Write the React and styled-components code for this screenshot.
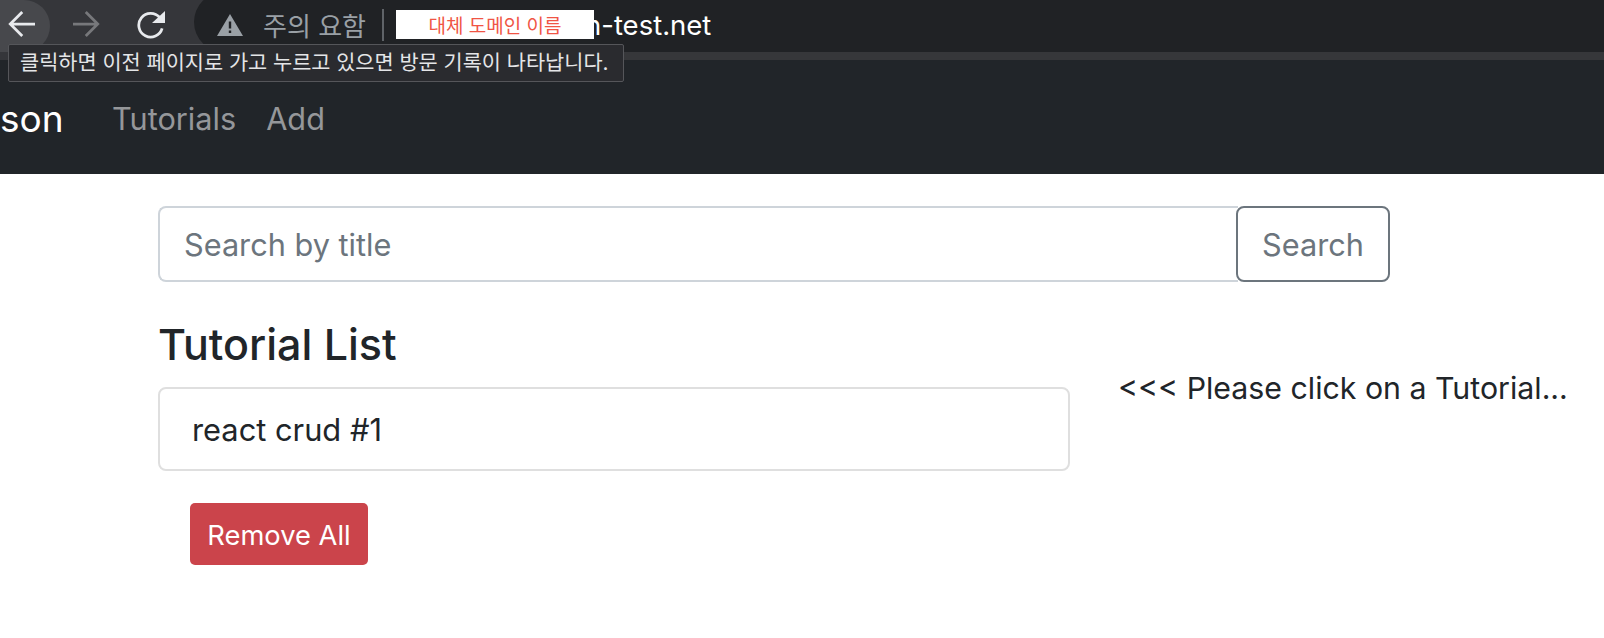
import styled, { createGlobalStyle } from "styled-components";

const GlobalStyle = createGlobalStyle`
    html, body {
        margin: 0;
        padding: 0;
        background: #fff;
        font-family: Inter, "Noto Sans CJK KR", sans-serif;
        color: #212529;
    }
    * {
        box-sizing: border-box;
    }
`

const Page = styled.div`
    position: relative;
    width: 1604px;
    height: 638px;
    overflow: hidden;
`

const BrowserBar = styled.div`
    display: flex;
    align-items: flex-start;
    height: 60px;
    background: linear-gradient(#202225 0, #202225 52px, #36373a 52px, #36373a 60px);
`

const NavButtons = styled.div`
    display: flex;
    align-items: flex-start;
    flex: none;
    width: 224px;
    height: 60px;
    margin-right: -30px;
    background: #35363a;
`

const NavButton = styled.div`
    display: flex;
    align-items: center;
    justify-content: center;
    flex: none;
    width: ${(p) => p.$w}px;
    height: 52px;
    padding-right: ${(p) => (p.$hover ? 6 : 0)}px;
    border-radius: 0 26px 26px 0;
    background: ${(p) => (p.$hover ? "#47484c" : "transparent")};
    svg {
        margin-top: -4px;
    }
`

const AddressBar = styled.div`
    position: relative;
    display: flex;
    align-items: center;
    flex: 1;
    height: 60px;
    margin-top: -8px;
    padding: 5px 0 0 23px;
    border-radius: 30px 0 0 30px;
    background: #202225;
`

const Warning = styled.span`
    margin-left: 20px;
    color: #9aa0a6;
    font-size: 26px;
`

const Divider = styled.span`
    width: 2px;
    height: 32px;
    margin: 0 12px 0 16px;
    background: #5f6368;
`

const DomainMask = styled.span`
    position: relative;
    z-index: 1;
    display: flex;
    align-items: center;
    justify-content: center;
    width: 198px;
    height: 29px;
    background: #fff;
    color: #f05545;
    font-size: 19px;
`

const Domain = styled.span`
    margin-left: -9px;
    color: #fff;
    font-size: 27.5px;
`

const Tooltip = styled.div`
    position: absolute;
    top: 44px;
    left: 8px;
    width: 616px;
    height: 38px;
    padding-left: 11px;
    line-height: 36px;
    background: #2a2b2f;
    border: 1px solid #55565a;
    border-radius: 2px;
    color: #e4e5e7;
    font-size: 20.8px;
    white-space: nowrap;
`

const NavBar = styled.nav`
    display: flex;
    align-items: center;
    height: 114px;
    padding-top: 2px;
    background: #212529;
`

const Brand = styled.span`
    width: 112px;
    color: #fff;
    font-size: 37px;
`

const NavLink = styled.span`
    margin-right: 30px;
    color: #95979a;
    font-size: 30.7px;
`

const Content = styled.main`
    padding: 32px 0 0 158px;
`

const SearchRow = styled.div`
    display: flex;
    width: 1232px;
    height: 76px;
`

const SearchInput = styled.div`
    flex: 1;
    padding-left: 24px;
    line-height: 74px;
    border: 2px solid #ced4da;
    border-right: 0;
    border-radius: 8px 0 0 8px;
    color: #6c757d;
    font-size: 30.7px;
`

const SearchButton = styled.div`
    width: 154px;
    margin-left: -2px;
    line-height: 74px;
    text-align: center;
    border: 2px solid #6c757d;
    border-radius: 8px;
    color: #6c757d;
    font-size: 30.7px;
`

const Columns = styled.div`
    display: flex;
    margin-top: 34px;
`

const ListColumn = styled.section`
    width: 912px;
`

const Heading = styled.h4`
    margin: 0;
    height: 71px;
    font-size: 43px;
    font-weight: 550;
    line-height: 56px;
`

const ListItem = styled.div`
    height: 84px;
    padding-left: 32px;
    line-height: 82px;
    border: 2px solid #dfdfdf;
    border-radius: 8px;
    font-size: 30.8px;
`

const RemoveButton = styled.div`
    width: 178px;
    height: 62px;
    margin: 32px 0 0 32px;
    line-height: 66px;
    text-align: center;
    background: #cb444b;
    border-radius: 5px;
    color: #fff;
    font-size: 27.3px;
`

const Hint = styled.p`
    margin: 50px 0 0 48px;
    font-size: 30.3px;
    line-height: 44px;
    white-space: nowrap;
`

const App = () => {
    return (
        <Page>
            <GlobalStyle />
            <BrowserBar>
                <NavButtons>
                    <NavButton $w={50} $hover>
                        <svg width="30" height="30" viewBox="0 0 24 24" fill="none" stroke="#e8eaed" strokeWidth="2.2">
                            <path d="M22.4 12H3M12.2 2.4L2.6 12l9.6 9.6" />
                        </svg>
                    </NavButton>
                    <NavButton $w={72}>
                        <svg width="30" height="30" viewBox="0 0 24 24" fill="none" stroke="#77787b" strokeWidth="2.2">
                            <path d="M1.6 12H21M11.8 2.4l9.6 9.6-9.6 9.6" />
                        </svg>
                    </NavButton>
                    <NavButton $w={58}>
                        <svg width="30" height="30" viewBox="0 0 24 24" fill="none">
                            <path d="M19 6.8A9.5 9.5 0 1 0 20.9 15.5" stroke="#e8eaed" strokeWidth="2.2" />
                            <path d="M12.8 11.2h10.4V1.6z" fill="#e8eaed" />
                        </svg>
                    </NavButton>
                </NavButtons>
                <AddressBar>
                    <svg width="26" height="22" viewBox="0 0 26 22">
                        <path d="M13 0l13 22H0zM11.8 7.5v7h2.4v-7zm0 9v2.4h2.4v-2.4z" fill="#9aa0a6" fillRule="evenodd" />
                    </svg>
                    <Warning>주의 요함</Warning>
                    <Divider />
                    <DomainMask>대체 도메인 이름</DomainMask>
                    <Domain>n-test.net</Domain>
                </AddressBar>
            </BrowserBar>
            <Tooltip>클릭하면 이전 페이지로 가고 누르고 있으면 방문 기록이 나타납니다.</Tooltip>
            <NavBar>
                <Brand>son</Brand>
                <NavLink>Tutorials</NavLink>
                <NavLink>Add</NavLink>
            </NavBar>
            <Content>
                <SearchRow>
                    <SearchInput>Search by title</SearchInput>
                    <SearchButton>Search</SearchButton>
                </SearchRow>
                <Columns>
                    <ListColumn>
                        <Heading>Tutorial List</Heading>
                        <ListItem>react crud #1</ListItem>
                        <RemoveButton>Remove All</RemoveButton>
                    </ListColumn>
                    <Hint>{"<<< Please click on a Tutorial..."}</Hint>
                </Columns>
            </Content>
        </Page>
    );
}

export default App;
